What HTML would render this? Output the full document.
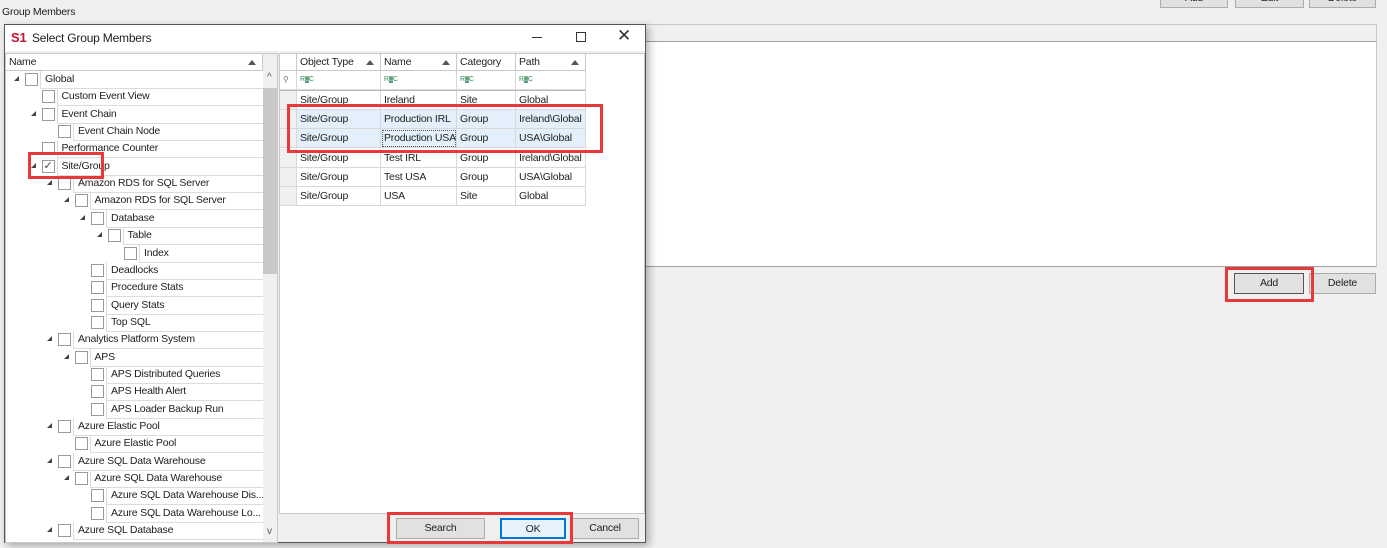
<!DOCTYPE html><html><head><style>
*{box-sizing:border-box;margin:0;padding:0}
body{width:1387px;height:548px;background:#f0f0f0;font-family:"Liberation Sans",sans-serif;font-size:10.5px;letter-spacing:-0.2px;color:#1e1e1e;position:relative;overflow:hidden}
.a{position:absolute}
.btn{position:absolute;background:#e1e1e1;border:1px solid #adadad;text-align:center;line-height:18px}
.red{position:absolute;border:3px solid #e8393a}
.row{position:absolute;left:0;height:17px}
.cb{position:absolute;width:13px;height:13px;border:1px solid #9a9a9a;background:#fff;top:2px}
.tx{position:absolute;top:0;height:18px;line-height:17px;border-left:1px solid #dcdcdc;border-bottom:1px solid #dcdcdc;padding-left:4px;right:0;white-space:nowrap;overflow:hidden}
.ex{position:absolute;top:5px;width:0;height:0;border-left:5px solid transparent;border-bottom:5px solid #444}
.gc{position:absolute;height:19px;line-height:18px;padding-left:3px;border-right:1px solid #d8d8d8;border-bottom:1px solid #d8d8d8;white-space:nowrap;overflow:hidden}
.hd{position:absolute;top:0;height:17px;line-height:16px;padding-left:3px;border-right:1px solid #c8c8c8;border-bottom:1px solid #c8c8c8;background:#fff}
.ar{position:absolute;right:6px;top:6px;border-left:4px solid transparent;border-right:4px solid transparent;border-bottom:5px solid #555}
</style></head><body>
<div class="a" style="left:2px;top:6px">Group Members</div>
<div class="btn" style="left:1160px;top:-12px;width:68px;height:20px;line-height:18px">Add</div>
<div class="btn" style="left:1235px;top:-12px;width:69px;height:20px">Edit</div>
<div class="btn" style="left:1309px;top:-12px;width:67px;height:20px">Delete</div>
<div class="a" style="left:645px;top:24px;width:732px;height:18px;background:#f0f0f0;border-top:1px solid #c8c8c8;border-right:1px solid #c8c8c8;border-bottom:1px solid #a0a0a0"></div>
<div class="a" style="left:645px;top:42px;width:732px;height:225px;background:#fff;border-right:1px solid #c8c8c8;border-bottom:1px solid #a0a0a0"></div>
<div class="btn" style="left:1234px;top:273px;width:70px;height:21px;border:1px solid #555;line-height:19px">Add</div>
<div class="btn" style="left:1309px;top:273px;width:67px;height:21px;line-height:19px">Delete</div>
<div class="red" style="left:1225px;top:267px;width:89px;height:35px"></div>

<div class="a" style="left:4px;top:24px;width:642px;height:519px;background:#f0f0f0;border:1px solid #555;box-shadow:3px 3px 8px rgba(0,0,0,.3)">
 <div class="a" style="left:0;top:0;width:640px;height:26px;background:#fff">
  <div class="a" style="left:6px;top:5px;width:16px;height:16px;color:#c8102e;font-weight:bold;font-size:13px;line-height:16px">S1</div>
  <div class="a" style="left:27px;top:6px;font-size:12px">Select Group Members</div>
  <div class="a" style="left:527px;top:12px;width:10px;height:1px;background:#333"></div>
  <div class="a" style="left:571px;top:7px;width:10px;height:10px;border:1px solid #333"></div>
  <div class="a" style="left:612px;top:1px;font-size:17px;color:#333">✕</div>
 </div>
 <div class="a" style="left:0;top:28px;width:273px;height:490px;background:#fff;border:1px solid #c8c8c8;overflow:hidden">
  <div class="a" style="left:0;top:0;width:257px;height:17px;border-bottom:1px solid #c8c8c8;border-right:1px solid #c8c8c8;line-height:16px;padding-left:3px">Name<div class="ar"></div></div>
  <div class="a" style="left:257px;top:0;width:16px;height:490px;background:#f0f0f0"></div>
  <div class="a" style="left:257px;top:34px;width:16px;height:186px;background:#c8c8c8"></div>
  <div class="a" style="left:261px;top:18px;font-size:10px;color:#555">^</div>
  <div class="a" style="left:261px;top:472px;font-size:10px;color:#555">v</div>
  <div id="tree" class="a" style="left:0;top:17px;width:257px;height:473px"></div>
 </div>
 <div class="a" style="left:274px;top:28px;width:366px;height:461px;background:#fff;border:1px solid #c8c8c8">
  <div class="hd" style="left:0;width:17px"></div>
  <div class="hd" style="left:17px;width:84px">Object Type<div class="ar"></div></div>
  <div class="hd" style="left:101px;width:76px">Name<div class="ar"></div></div>
  <div class="hd" style="left:177px;width:59px">Category</div>
  <div class="hd" style="left:236px;width:70px">Path<div class="ar"></div></div>
  <div id="grid"></div>
 </div>
 <div class="btn" style="left:391px;top:493px;width:89px;height:21px">Search</div>
 <div class="btn" style="left:495px;top:493px;width:66px;height:21px;border:2px solid #0078d7;background:#e5f1fb">OK</div>
 <div class="btn" style="left:566px;top:493px;width:68px;height:21px">Cancel</div>
</div>
<div class="red" style="left:387px;top:512px;width:186px;height:32px"></div>
<div class="red" style="left:287px;top:104px;width:316px;height:49px"></div>
<div class="red" style="left:28px;top:152px;width:76px;height:27px"></div>
<script>
var T=[["Global",0,1],["Custom Event View",1],["Event Chain",1,1],["Event Chain Node",2],["Performance Counter",1],["Site/Group",1,1,1],["Amazon RDS for SQL Server",2,1],["Amazon RDS for SQL Server",3,1],["Database",4,1],["Table",5,1],["Index",6],["Deadlocks",4],["Procedure Stats",4],["Query Stats",4],["Top SQL",4],["Analytics Platform System",2,1],["APS",3,1],["APS Distributed Queries",4],["APS Health Alert",4],["APS Loader Backup Run",4],["Azure Elastic Pool",2,1],["Azure Elastic Pool",3],["Azure SQL Data Warehouse",2,1],["Azure SQL Data Warehouse",3,1],["Azure SQL Data Warehouse Dis...",4],["Azure SQL Data Warehouse Lo...",4],["Azure SQL Database",2,1]];
var h="";T.forEach(function(r,i){var y=i*17.35,x=19+r[1]*16.5;h+='<div class="row" style="top:'+y+'px;width:257px">'+(r[2]?'<div class="ex" style="left:'+(x-11)+'px"></div>':'')+'<div class="cb" style="left:'+x+'px">'+(r[3]?'<span style="position:absolute;left:1px;top:-2px;font-size:11px;color:#444">✓</span>':'')+'</div><div class="tx" style="left:'+(x+15)+'px">'+r[0]+'</div></div>'});
document.getElementById("tree").innerHTML=h;
var G=[["Site/Group","Ireland","Site","Global"],["Site/Group","Production IRL","Group","Ireland\\Global",1],["Site/Group","Production USA","Group","USA\\Global",1],["Site/Group","Test IRL","Group","Ireland\\Global"],["Site/Group","Test USA","Group","USA\\Global"],["Site/Group","USA","Site","Global"]];
var L=[17,101,177,236],W=[84,76,59,70],g="";
g+='<div class="gc" style="left:0;top:17px;width:17px;color:#777;font-size:8px">⚲</div>';
for(var c=0;c<4;c++)g+='<div class="gc" style="left:'+L[c]+'px;top:17px;width:'+W[c]+'px;font-size:7px;color:#3a8a5a">R<b style="background:#5aa07a;color:#fff">□</b>C</div>';
g+='<div class="a" style="left:0;top:36px;width:306px;height:1px;background:#bbb"></div>';
G.forEach(function(r,i){var y=37+i*19.2;g+='<div class="gc" style="left:0;top:'+y+'px;width:17px;background:#f0f0f0"></div>';for(var c=0;c<4;c++)g+='<div class="gc" style="left:'+L[c]+'px;top:'+y+'px;width:'+W[c]+'px;'+(r[4]?'background:#e3f0fb;':'')+(i==2&&c==1?'outline:1px dotted #555;outline-offset:-2px;':'')+'">'+r[c]+'</div>'});
document.getElementById("grid").innerHTML=g;
</script>
</body></html>
